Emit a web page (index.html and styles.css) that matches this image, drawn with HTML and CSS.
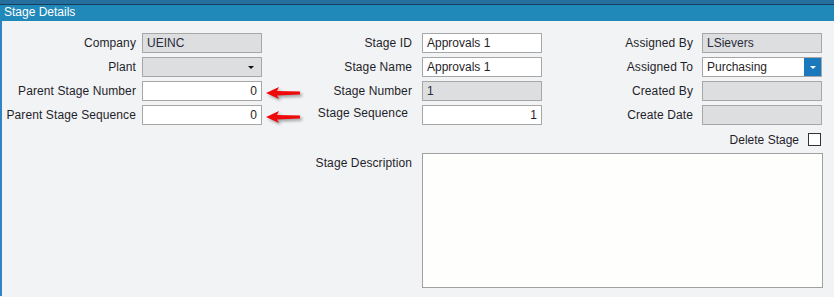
FILE: index.html
```html
<!DOCTYPE html>
<html lang="en">

<head>
    <meta charset="UTF-8">
    <meta name="viewport" content="width=device-width, initial-scale=1.0">
    <title>Stage Details</title>
    <link rel="stylesheet" href="styles.css">
</head>

<body>
    <!-- Заголовок панели -->
    <div class="panel-header">Stage Details</div>

    <div class="panel-body">
        <div class="form-grid">
            <!-- Ряд 1 -->
            <label class="lbl lbl-1">Company</label>
            <input class="field readonly" value="UEINC" readonly>
            <label class="lbl lbl-2">Stage ID</label>
            <input class="field" value="Approvals 1">
            <label class="lbl lbl-3">Assigned By</label>
            <input class="field readonly" value="LSievers" readonly>

            <!-- Ряд 2 -->
            <label class="lbl lbl-1">Plant</label>
            <div class="field readonly select-gray"><span></span><span class="caret dark"></span></div>
            <label class="lbl lbl-2">Stage Name</label>
            <input class="field" value="Approvals 1">
            <label class="lbl lbl-3">Assigned To</label>
            <div class="field select-blue"><span class="select-text">Purchasing</span><span class="select-btn"><span class="caret light"></span></span></div>

            <!-- Ряд 3 -->
            <label class="lbl lbl-1">Parent Stage Number</label>
            <div class="field-wrap">
                <input class="field num" value="0">
                <svg class="arrow" width="38" height="16" viewBox="0 0 38 16">
                    <polygon points="1,7 14,1 12,5 35,5.5 35,8.5 12,9.5 14,13" fill="#ee0a0a" />
                </svg>
            </div>
            <label class="lbl lbl-2">Stage Number</label>
            <input class="field readonly" value="1" readonly>
            <label class="lbl lbl-3">Created By</label>
            <input class="field readonly" value="" readonly>

            <!-- Ряд 4 -->
            <label class="lbl lbl-1">Parent Stage Sequence</label>
            <div class="field-wrap">
                <input class="field num" value="0">
                <svg class="arrow" width="38" height="16" viewBox="0 0 38 16">
                    <polygon points="1,7 14,1 12,5 35,5.5 35,8.5 12,9.5 14,13" fill="#ee0a0a" />
                </svg>
            </div>
            <label class="lbl lbl-2 lbl-up">Stage Sequence</label>
            <input class="field num" value="1">
            <label class="lbl lbl-3">Create Date</label>
            <input class="field readonly" value="" readonly>

            <!-- Ряд 5 -->
            <div class="delete-row">
                <span>Delete Stage</span>
                <span class="checkbox"></span>
            </div>

            <!-- Ряд 6 -->
            <label class="lbl lbl-2 lbl-top desc-label">Stage Description</label>
            <textarea class="desc"></textarea>
        </div>
    </div>
</body>

</html>
```

FILE: styles.css
```css
/* Общие стили */
html,
body {
    margin: 0;
    padding: 0;
}

body {
    width: 834px;
    height: 297px;
    overflow: hidden;
    background-color: #f2f3f5;
    font-family: "Liberation Sans", Arial, sans-serif;
    font-size: 12px;
    color: #1f1f2a;
}

/* Заголовок */
.panel-header {
    height: 17px;
    line-height: 17px;
    padding-left: 4px;
    background-color: #2189b9;
    border-top: 4px solid #256f9f;
    box-shadow: inset 0 1px 0 #163f5e;
    color: #ffffff;
}

/* Тело панели */
.panel-body {
    height: 275px;
    border-left: 2px solid #3183c4;
    box-sizing: border-box;
    padding-top: 12px;
}

.form-grid {
    display: grid;
    grid-template-columns: 140px 120px 160px 120px 160px 120px;
    grid-auto-rows: 20px;
    row-gap: 4px;
}

/* Подписи */
.lbl {
    display: flex;
    align-items: center;
    justify-content: flex-end;
    white-space: nowrap;
    letter-spacing: 0.1px;
}

.lbl-1 {
    padding-right: 6px;
}

.lbl-2 {
    padding-right: 10px;
}

.lbl-3 {
    padding-right: 9px;
}

.lbl-up {
    align-items: flex-start;
    padding-right: 14px;
    padding-top: 1px;
}

.lbl-top {
    align-items: flex-start;
    padding-top: 3px;
}

/* Поля */
.field {
    box-sizing: border-box;
    width: 120px;
    height: 20px;
    margin: 0;
    padding: 0 4px;
    border: 1px solid #a7a7a7;
    background-color: #ffffff;
    font-family: inherit;
    font-size: 12px;
    color: #1f1f2a;
    outline: none;
}

.readonly {
    background-color: #dcdee0;
    color: #2a2a3a;
}

.num {
    text-align: right;
}

.field-wrap {
    position: relative;
}

.arrow {
    position: absolute;
    left: 123px;
    top: 5px;
    filter: drop-shadow(2px 2px 1.5px rgba(0, 0, 0, 0.35));
}

/* Выпадающие списки */
.select-gray,
.select-blue {
    display: flex;
    align-items: center;
    justify-content: space-between;
}

.select-gray {
    padding-right: 7px;
}

.select-blue {
    padding-right: 0;
}

.select-btn {
    width: 17px;
    height: 18px;
    background-color: #1a78bd;
    display: flex;
    align-items: center;
    justify-content: center;
}

.caret {
    width: 0;
    height: 0;
    border-left: 3px solid transparent;
    border-right: 3px solid transparent;
    border-top: 3px solid #111;
}

.caret.light {
    border-top-color: #ffffff;
}

/* Удаление */
.delete-row {
    grid-column: 5 / 7;
    display: flex;
    align-items: center;
    justify-content: flex-end;
    gap: 9px;
    padding-top: 1px;
}

.checkbox {
    width: 11px;
    height: 11px;
    border: 1px solid #333;
    background-color: #ffffff;
    margin-right: 1px;
}

/* Описание */
.desc-label {
    grid-column: 3;
}

.desc {
    grid-column: 4 / 7;
    box-sizing: border-box;
    width: 401px;
    height: 135px;
    margin: 0;
    border: 1px solid #a0a0a0;
    background-color: #fefefd;
    resize: none;
    outline: none;
}
```
